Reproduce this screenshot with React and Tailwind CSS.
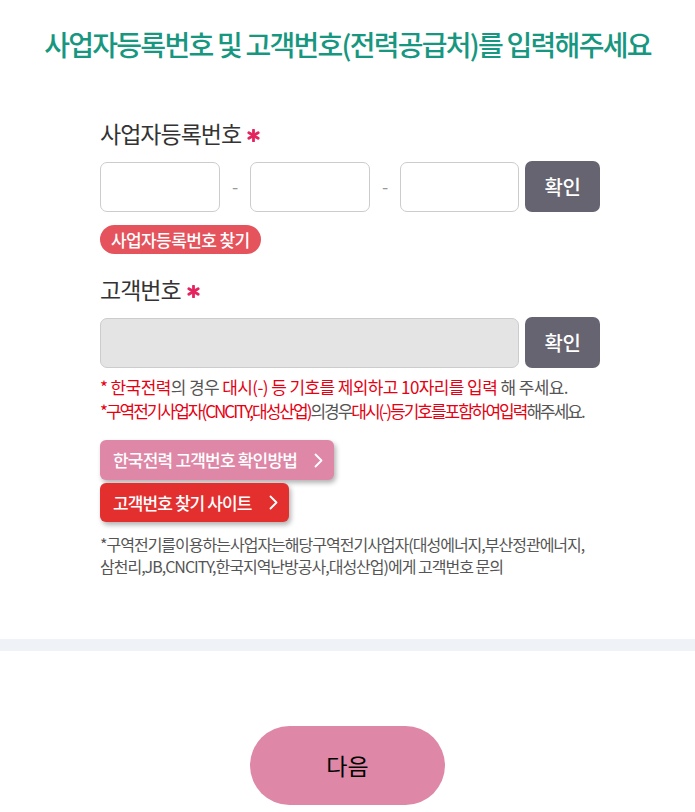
const FONT = { fontFamily: '"Noto Sans CJK KR", "Noto Sans", sans-serif' };

function Asterisk() {
  return (
    <svg width="13" height="13" viewBox="0 0 12 12" className="mt-[5px]">
      <g stroke="#e3245e" strokeWidth="2.6" strokeLinecap="round">
        <path d="M6 1v10" />
        <path d="M1.7 3.5l8.6 5" />
        <path d="M1.7 8.5l8.6-5" />
      </g>
    </svg>
  );
}

function Required({ children }) {
  return (
    <div className="flex items-center gap-[6px] text-[23px] leading-[28px] tracking-[-1px] text-[#333]">
      <span>{children}</span>
      <Asterisk />
    </div>
  );
}

function Field({ className = "" }) {
  return (
    <input
      className={`h-[50px] rounded-[7px] border border-[#cccccc] px-3 text-[17px] outline-none ${className}`}
    />
  );
}

function ConfirmButton() {
  return (
    <button
      type="button"
      className="h-[51px] w-[75px] shrink-0 rounded-[7px] bg-[#666470] text-[20px] font-medium tracking-[-0.5px] text-white"
    >
      확인
    </button>
  );
}

function Chevron() {
  return (
    <svg width="9" height="15" viewBox="0 0 9 15" fill="none" className="ml-[17px]">
      <path d="M1.5 1.5 7.5 7.5 1.5 13.5" stroke="white" strokeWidth="1.8" strokeLinecap="round" strokeLinejoin="round" />
    </svg>
  );
}

export default function App() {
  return (
    <div className="min-h-[812px] bg-white" style={FONT}>
      <h1 className="pt-[26px] text-center text-[28px] font-medium leading-[36px] tracking-[-1.75px] text-[#17977f]">
        사업자등록번호 및 고객번호(전력공급처)를 입력해주세요
      </h1>

      <div className="ml-[100px] mt-[57px] w-[500px]">
        <Required>사업자등록번호</Required>

        <div className="mt-[14px] flex items-center">
          <Field className="w-[120px]" />
          <span className="w-[30px] text-center text-[18px] text-[#999]">-</span>
          <Field className="w-[120px]" />
          <span className="w-[30px] text-center text-[18px] text-[#999]">-</span>
          <Field className="w-[119px]" />
          <div className="ml-[6px]">
            <ConfirmButton />
          </div>
        </div>

        <button
          type="button"
          className="mt-[13px] h-[29px] rounded-full bg-[#e5535c] px-[11px] text-[17px] font-medium leading-[29px] tracking-[-0.6px] text-white"
        >
          사업자등록번호 찾기
        </button>

        <div className="mt-[21px]">
          <Required>고객번호</Required>
        </div>

        <div className="mt-[14px] flex items-center">
          <Field className="w-[419px] bg-[#e4e4e4]" />
          <div className="ml-[6px]">
            <ConfirmButton />
          </div>
        </div>

        <div className="mt-[7px] whitespace-nowrap text-[17px] leading-[24px] text-[#555]">
          <p className="tracking-[-0.6px]">
            <span className="text-[#e60012]">* 한국전력</span>의 경우{" "}
            <span className="text-[#e60012]">대시(-) 등 기호를 제외하고 10자리를 입력</span> 해 주세요.
          </p>
          <p className="tracking-[-2px]">
            <span className="text-[#e60012]">*구역전기사업자(CNCITY,대성산업)</span>의경우
            <span className="text-[#e60012]">대시(-)등기호를포함하여입력</span>해주세요.
          </p>
        </div>

        <div className="mt-[17px] flex flex-col items-start gap-[3px]">
          <button
            type="button"
            className="flex h-[40px] items-center rounded-[6px] bg-[#de87a7] pl-[13px] pr-[11px] text-[17px] font-medium tracking-[-0.8px] text-white shadow-[2px_3px_5px_rgba(0,0,0,0.3)]"
          >
            한국전력 고객번호 확인방법
            <Chevron />
          </button>
          <button
            type="button"
            className="flex h-[39px] items-center rounded-[6px] bg-[#e3302f] pl-[13px] pr-[11px] text-[17px] font-medium tracking-[-0.9px] text-white shadow-[2px_3px_5px_rgba(0,0,0,0.3)]"
          >
            고객번호 찾기 사이트
            <Chevron />
          </button>
        </div>

        <p className="mt-[11px] whitespace-nowrap text-[16px] leading-[22px] tracking-[-1px] text-[#555]">
          *구역전기를이용하는사업자는해당구역전기사업자(대성에너지,부산정관에너지,
          <br />
          삼천리,JB,CNCITY,한국지역난방공사,대성산업)에게 고객번호 문의
        </p>
      </div>

      <div className="mt-[62px] h-[12px] bg-[#eff2f7]" />

      <div className="flex justify-center pt-[75px]">
        <button
          type="button"
          className="h-[79px] w-[195px] rounded-full bg-[#de87a7] text-[23px] text-black"
        >
          다음
        </button>
      </div>
    </div>
  );
}
